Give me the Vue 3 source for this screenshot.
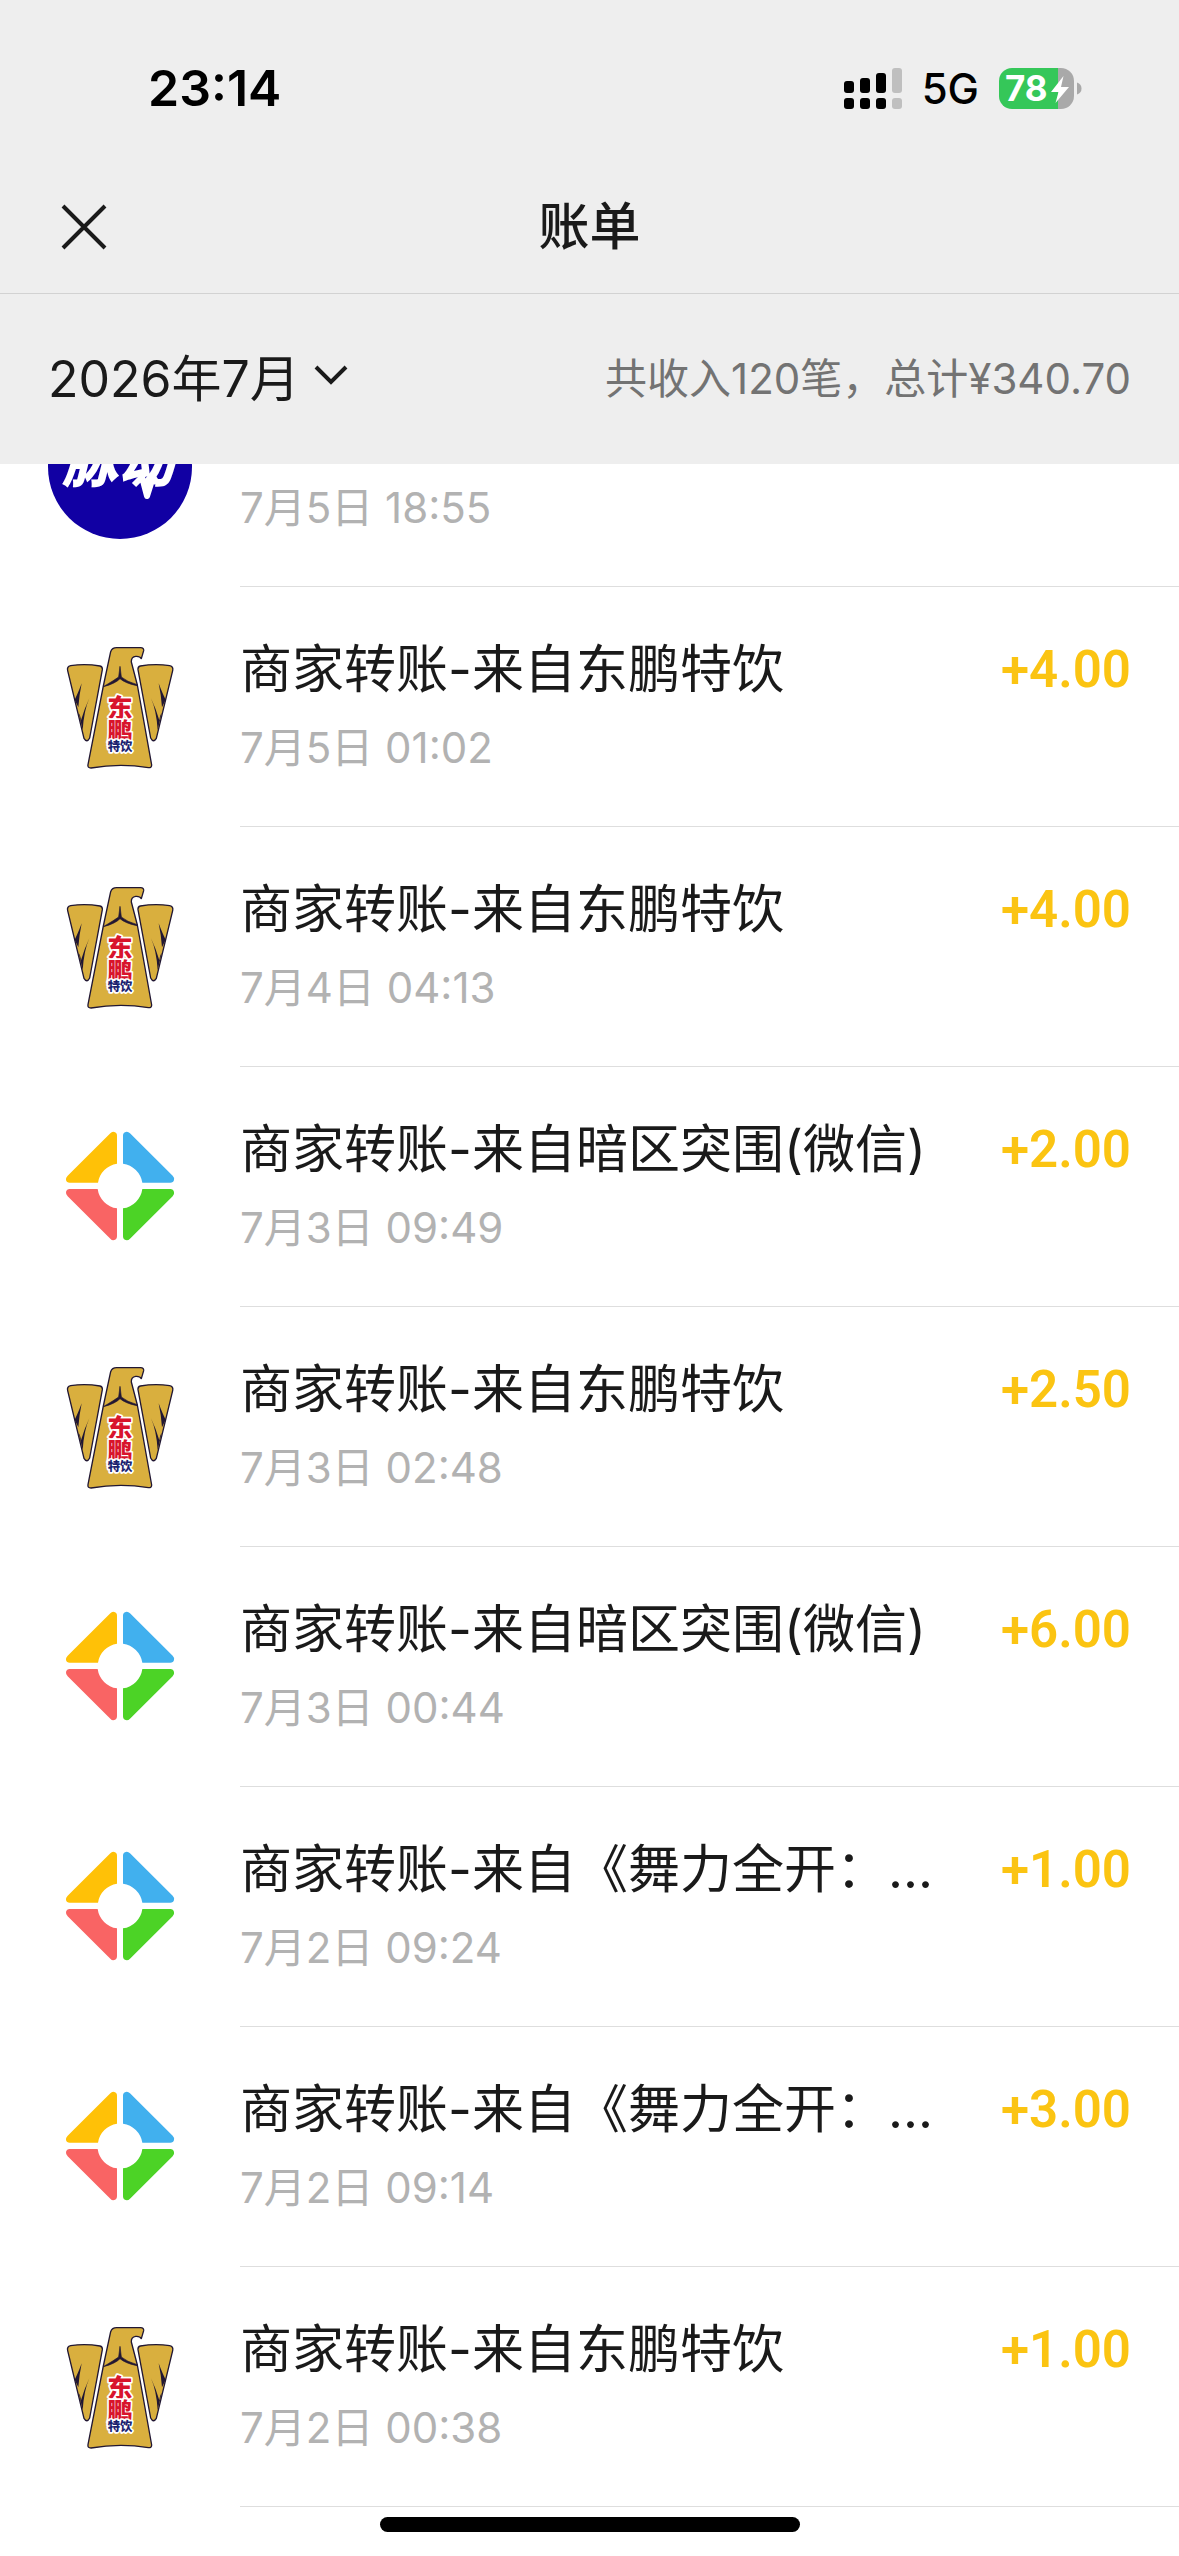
<template>
  <div class="bill-page">
    <header class="page-header">
      <div class="status-bar">
        <span class="status-time">23:14</span>
        <div class="status-right">
          <svg class="signal" viewBox="0 0 58 41" aria-hidden="true">
            <rect x="0" y="13" width="10" height="12" rx="3" />
            <rect x="16" y="10" width="10" height="15" rx="3" />
            <rect x="32" y="5" width="10" height="20" rx="3" />
            <rect class="dim" x="48" y="0" width="10" height="25" rx="3" />
            <rect x="0" y="30" width="10" height="11" rx="3" />
            <rect x="16" y="30" width="10" height="11" rx="3" />
            <rect x="32" y="30" width="10" height="11" rx="3" />
            <rect class="dim" x="48" y="30" width="10" height="11" rx="3" />
          </svg>
          <span class="network">5G</span>
          <svg class="battery" viewBox="0 0 83 41" aria-hidden="true">
            <path d="M59 0h3a13 13 0 0 1 13 13v15a13 13 0 0 1-13 13h-3z" fill="#a9a9a9" />
            <path d="M13 0h46v41H13A13 13 0 0 1 0 28V13A13 13 0 0 1 13 0z" fill="#35c759" />
            <path d="M78 14.500q4.500 1.500 4.500 6t-4.500 6z" fill="#a9a9a9" />
            <text x="6" y="33">78</text>
            <path d="M64.500 8L52 24h7.500L56.500 35L70 19h-8z" fill="#fff" />
          </svg>
        </div>
      </div>

      <div class="nav-bar">
        <button class="close-btn" aria-label="关闭">
          <svg viewBox="0 0 48 48">
            <path d="M3 3L45 45M45 3L3 45" />
          </svg>
        </button>
        <h1 class="nav-title">账单</h1>
      </div>

      <div class="filter-bar">
        <button class="month-btn">
          {{ month }}
          <svg class="chevron" viewBox="0 0 34 20">
            <path d="M2 2L17 17L32 2" />
          </svg>
        </button>
        <span class="summary">共收入{{ count }}笔，总计¥{{ total }}</span>
      </div>
    </header>

    <ul class="bill-list">
      <li v-for="(bill, index) in bills" :key="index" class="bill-row" :class="{ clipped: !bill.title }">
        <!-- 脉动 -->
        <svg v-if="bill.logo === 'maidong'" class="logo" viewBox="0 0 144 144">
          <circle cx="72" cy="72" r="72" fill="#1100a3" />
          <text class="maidong-text" x="14" y="87">脉动</text>
          <path d="M86 90L94 82L99 101L105 82L109 88" fill="none" stroke="#fff" stroke-width="6" stroke-linejoin="round" />
        </svg>

        <!-- 东鹏特饮 -->
        <svg v-else-if="bill.logo === 'dongpeng'" class="logo" viewBox="24 12 432 432">
          <g fill="#d9af3e" stroke="#211733" stroke-width="4" stroke-linejoin="round">
            <path d="M212 62Q216 50 230 50H302Q312 50 311 59L304 83Q300 75 287 76Q273 78 274 93L292 162L335 402Q335 411 325 410Q240 396 153 411Q142 411 144 401L190 165Z" />
            <path v-for="side in wings" :key="side" :transform="side" d="M83 119Q80 107 92 104Q135 97 180 105Q188 107 187 116L149 321Q141 337 132 322Z" />
          </g>
          <path d="M190 167Q222 148 236 138L240 106L244 138Q260 152 292 161L291 164Q256 157 240 143Q226 158 190 167Z" fill="#211733" stroke="#211733" stroke-width="2" />
          <g fill="#211733">
            <path v-for="side in wings" :key="side" :transform="side" d="M125 157Q118 190 115 229L104 206Q114 187 125 157ZM148 202Q132 238 128 297L116 246Q121 252 123 268Q132 236 148 202Z" />
          </g>
          <text class="dp-red" x="202" y="258">东</text>
          <text class="dp-red" x="202" y="329">鹏</text>
          <text class="dp-blue" x="203" y="360">特饮</text>
        </svg>

        <!-- 微信游戏 -->
        <svg v-else class="logo" viewBox="24 12 432 432">
          <path d="M211 67Q216 61 223 63Q231 65 231 74V158A68 68 0 0 0 174 215H89Q80 215 78 207Q77 200 83 194Z" fill="#ffc107" />
          <path d="M249 74Q249 65 257 63Q264 61 270 67L398 194Q404 200 402 207Q400 215 391 215H307A68 68 0 0 0 249 158Z" fill="#41b0ee" />
          <path d="M89 234H173A68 68 0 0 0 231 292V376Q231 385 223 387Q216 389 211 383L83 256Q77 250 78 243Q80 234 89 234Z" fill="#f96464" />
          <path d="M307 234H391Q400 234 402 243Q404 250 398 256L270 383Q264 389 257 387Q249 385 249 376V292A68 68 0 0 0 307 234Z" fill="#4cd326" />
        </svg>

        <div class="bill-body">
          <div v-if="bill.title" class="bill-top">
            <span class="bill-title">{{ bill.title }}</span>
            <span class="bill-amount">{{ bill.amount }}</span>
          </div>
          <div class="bill-time">{{ bill.time }}</div>
        </div>
      </li>
    </ul>

    <div class="home-indicator"></div>
  </div>
</template>

<script setup>
const month = '2026年7月';
const count = 120;
const total = '340.70';

// 左右翅膀对称
const wings = ['translate(0 0)', 'translate(481 0) scale(-1 1)'];

const bills = [
  { logo: 'maidong', time: '7月5日 18:55' },
  { logo: 'dongpeng', title: '商家转账-来自东鹏特饮', time: '7月5日 01:02', amount: '+4.00' },
  { logo: 'dongpeng', title: '商家转账-来自东鹏特饮', time: '7月4日 04:13', amount: '+4.00' },
  { logo: 'game', title: '商家转账-来自暗区突围(微信)', time: '7月3日 09:49', amount: '+2.00' },
  { logo: 'dongpeng', title: '商家转账-来自东鹏特饮', time: '7月3日 02:48', amount: '+2.50' },
  { logo: 'game', title: '商家转账-来自暗区突围(微信)', time: '7月3日 00:44', amount: '+6.00' },
  { logo: 'game', title: '商家转账-来自《舞力全开：...', time: '7月2日 09:24', amount: '+1.00' },
  { logo: 'game', title: '商家转账-来自《舞力全开：...', time: '7月2日 09:14', amount: '+3.00' },
  { logo: 'dongpeng', title: '商家转账-来自东鹏特饮', time: '7月2日 00:38', amount: '+1.00' },
];
</script>

<style>
body {
  margin: 0;
  background: #fff;
}
</style>

<style scoped>
.bill-page {
  position: relative;
  display: flex;
  flex-direction: column;
  min-height: 100vh;
  background: #fff;
  color: #1a1a1a;
  font-family: Inter, 'Noto Sans CJK SC', sans-serif;
}

button {
  padding: 0;
  border: none;
  background: none;
  color: inherit;
  font: inherit;
  cursor: pointer;
}

.page-header {
  background: #eee;
}

/* 状态栏 */
.status-bar {
  display: flex;
  align-items: center;
  justify-content: space-between;
  height: 176px;
  padding: 0 97px 0 148px;
  box-sizing: border-box;
  color: #000;
}

.status-time {
  font-size: 50px;
  font-weight: 600;
}

.status-right {
  display: flex;
  align-items: center;
  gap: 20px;
}

.signal {
  width: 58px;
  height: 41px;
}

.signal .dim {
  fill: #bfbfbf;
}

.network {
  font-size: 42px;
  font-weight: 500;
}

.battery {
  width: 83px;
  height: 41px;
  overflow: visible;
}

.battery text {
  fill: #fff;
  font-size: 35px;
  font-weight: 700;
}

/* 导航栏 */
.nav-bar {
  display: grid;
  grid-template-columns: 1fr auto 1fr;
  align-items: center;
  height: 118px;
  padding: 0 60px 16px;
  box-sizing: border-box;
  border-bottom: 1px solid #d2d2d2;
}

.close-btn {
  justify-self: start;
  width: 48px;
  height: 48px;
}

.close-btn svg {
  display: block;
  fill: none;
  stroke: #1a1a1a;
  stroke-width: 4;
}

.nav-title {
  margin: 0;
  font-size: 51px;
  font-weight: 500;
  line-height: 72px;
}

/* 月份与汇总 */
.filter-bar {
  display: flex;
  align-items: center;
  justify-content: space-between;
  height: 170px;
  padding: 0 48px 8px;
  box-sizing: border-box;
}

.month-btn {
  display: flex;
  align-items: center;
  gap: 14px;
  font-size: 50px;
}

.chevron {
  width: 34px;
  height: 20px;
  fill: none;
  stroke: #1a1a1a;
  stroke-width: 4;
}

.summary {
  color: #737373;
  font-size: 42px;
}

/* 账单列表 */
.bill-list {
  margin: 0;
  padding: 0;
  list-style: none;
}

.bill-row {
  display: flex;
  align-items: center;
  gap: 48px;
  height: 240px;
  padding-left: 48px;
}

.logo {
  flex: none;
  width: 144px;
  height: 144px;
}

.bill-body {
  flex: 1;
  min-width: 0;
  height: 240px;
  box-sizing: border-box;
  padding: 47px 48px 0 0;
  border-bottom: 1px solid #dedede;
}

.bill-top {
  display: flex;
  justify-content: space-between;
  gap: 48px;
  margin-bottom: 12px;
  line-height: 72px;
}

.bill-title {
  overflow: hidden;
  font-size: 52px;
  white-space: nowrap;
}

.bill-amount {
  flex: none;
  color: #fbc412;
  font-family: Roboto, sans-serif;
  font-size: 51px;
  font-weight: 600;
}

.bill-time {
  color: #b2b2b2;
  font-size: 42px;
  line-height: 60px;
}

/* 第一条滚动到顶部栏下方，只露出下半部分 */
.clipped {
  align-items: flex-end;
  height: 123px;
  overflow: hidden;
}

.clipped .logo {
  margin-bottom: 48px;
}

.clipped .bill-body {
  height: 123px;
  padding-top: 14px;
}

.maidong-text {
  fill: #fff;
  font-size: 56px;
  font-style: italic;
  font-weight: 900;
}

.dp-red,
.dp-blue {
  stroke: #fff;
  stroke-width: 10px;
  stroke-linejoin: round;
  paint-order: stroke;
  font-weight: 900;
}

.dp-red {
  fill: #d8142c;
  font-size: 76px;
}

.dp-blue {
  fill: #1b2370;
  font-size: 37px;
}

.home-indicator {
  position: absolute;
  bottom: 24px;
  left: 50%;
  width: 420px;
  height: 15px;
  border-radius: 8px;
  background: #000;
  transform: translateX(-50%);
}
</style>
